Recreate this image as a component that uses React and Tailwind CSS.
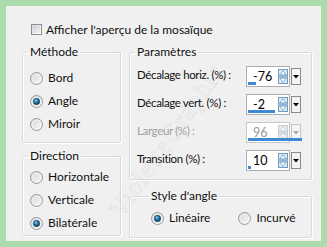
import React from "react";

const font = { fontFamily: "Lato, 'Open Sans', sans-serif" };

function Radio({ checked, label }) {
  return (
    <div className="flex items-center gap-[5px] h-[16px]">
      <svg width="13" height="13" viewBox="0 0 13 13" className="shrink-0">
        <defs>
          <linearGradient id="rb" x1="0" y1="0" x2="1" y2="1">
            <stop offset="0" stopColor="#d6d6d6" />
            <stop offset="1" stopColor="#f8f8f8" />
          </linearGradient>
          <radialGradient id="rd" cx="0.4" cy="0.35" r="0.7">
            <stop offset="0" stopColor="#8fd0f0" />
            <stop offset="0.5" stopColor="#1f6d9c" />
            <stop offset="1" stopColor="#0b3d5e" />
          </radialGradient>
        </defs>
        <circle cx="6.5" cy="6.5" r="6" fill="url(#rb)" stroke="#9a9a9a" strokeWidth="1" />
        <circle cx="6.5" cy="6.5" r="4.3" fill="none" stroke="#ffffff" strokeOpacity="0.6" strokeWidth="1" />
        {checked && <circle cx="6.5" cy="6.5" r="3.2" fill="url(#rd)" stroke="#0e3f60" strokeWidth="0.6" />}
      </svg>
      <span className="text-[12px] text-[#111] whitespace-nowrap">{label}</span>
    </div>
  );
}

function SpinArrows({ disabled }) {
  const c = disabled ? "#c4cdd4" : "#6f9cc4";
  const f = disabled ? "#e8ecef" : "#dbe9f5";
  return (
    <svg width="10" height="15" viewBox="0 0 10 15" className="shrink-0">
      <rect x="0.5" y="0.5" width="9" height="6.5" fill={f} stroke={c} />
      <rect x="0.5" y="8" width="9" height="6.5" fill={f} stroke={c} />
      <path d="M1.8 5.8 L5 1.8 L8.2 5.8 Z" fill="#fff" stroke={c} strokeWidth="0.8" />
      <path d="M1.8 9.2 L5 13.2 L8.2 9.2 Z" fill="#fff" stroke={c} strokeWidth="0.8" />
    </svg>
  );
}

function Spin({ value, bar, disabled, full }) {
  return (
    <div className="relative flex items-center h-[21px] shrink-0">
      <div className={`flex items-center w-[44px] h-[21px] border ${disabled ? "border-[#c8c8c8]" : "border-[#abadb3]"} bg-white pl-[6px] pr-[1px]`}>
        <span className={`flex-1 text-[12.5px] leading-none pt-[1px] ${disabled ? "text-[#9a9a9a]" : "text-black"}`}>{value}</span>
        <SpinArrows disabled={disabled} />
      </div>
      <div className={`ml-[1px] w-[10px] h-[17px] flex items-center justify-center border ${disabled ? "border-[#c8c8c8] bg-[#f4f4f4]" : "border-[#8a8a8a] bg-[#f4f4f4]"}`}>
        <svg width="6" height="4" viewBox="0 0 6 4">
          <path d="M0 0 L6 0 L3 3.5 Z" fill={disabled ? "#a8a8a8" : "#000"} />
        </svg>
      </div>
      <div
        className="absolute left-[2px] bottom-[2px] h-[3px] bg-[#3d8ad4]"
        style={{ width: full ? 54 : bar }}
      />
    </div>
  );
}

function Row({ label, value, bar, disabled, full }) {
  return (
    <div className="flex items-center justify-between gap-[2px] h-[21px]">
      <span className={`text-[11.5px] tracking-[-0.35px] whitespace-nowrap -mt-[4px] ${disabled ? "text-[#a0a0a0]" : "text-[#111]"}`}>{label}</span>
      <Spin value={value} bar={bar} disabled={disabled} full={full} />
    </div>
  );
}

function Group({ title, className, children }) {
  return (
    <fieldset className={`min-w-0 border border-[#d5dbe0] rounded-[2px] shadow-[inset_1px_1px_0_#ffffff,1px_1px_0_#ffffff] px-[7px] ${className}`}>
      <legend className="text-[12px] text-[#111] leading-[16px] px-[2px] -ml-[2px]">{title}</legend>
      {children}
    </fieldset>
  );
}

export default function App() {
  return (
    <div style={font} className="relative w-[327px] h-[247px] overflow-hidden border-[6px] border-[#acdcac] bg-[#f0f0f0] select-none">
      <div className="flex items-center gap-[4px] ml-[25px] mt-[17px] h-[13px]">
        <div className="w-[11px] h-[11px] border border-[#8e8f8f] bg-gradient-to-br from-[#dcdcdc] to-[#ffffff] flex items-center justify-center">
          <div className="w-[7px] h-[7px] bg-gradient-to-br from-[#cfcfcf] to-[#f4f4f4]" />
        </div>
        <span className="text-[12px] text-[#111]">Afficher l'aperçu de la mosaïque</span>
      </div>

      <div className="flex gap-[8px] ml-[16px] mt-[8px]">
        <div className="flex flex-col w-[99px] shrink-0">
          <Group title="Méthode" className="h-[99px] pt-[10px]">
            <div className="flex flex-col gap-[7px]">
              <Radio label="Bord" />
              <Radio label="Angle" checked />
              <Radio label="Miroir" />
            </div>
          </Group>
          <Group title="Direction" className="h-[88px] mt-[5px] pt-[5px]">
            <div className="flex flex-col gap-[7px]">
              <Radio label="Horizontale" />
              <Radio label="Verticale" />
              <Radio label="Bilatérale" checked />
            </div>
          </Group>
        </div>

        <div className="flex flex-col w-[183px] shrink-0">
          <Group title="Paramètres" className="h-[136px] pt-[6px] pr-[10px]">
            <div className="flex flex-col gap-[7px]">
              <Row label="Décalage horiz. (%) :" value="-76" bar={8} />
              <Row label="Décalage vert. (%) :" value="-2" bar={27} />
              <Row label="Largeur (%) :" value="96" disabled full />
              <Row label="Transition (%) :" value="10" bar={3} />
            </div>
          </Group>
          <Group title="Style d'angle" className="h-[50px] mt-[8px] pt-[6px] pl-[21px]">
            <div className="flex gap-[28px]">
              <Radio label="Linéaire" checked />
              <Radio label="Incurvé" />
            </div>
          </Group>
        </div>
      </div>

      <div className="pointer-events-none absolute left-[70px] top-[115px] -rotate-[55deg] text-[26px] tracking-[1px] text-transparent [-webkit-text-stroke:0.5px_rgba(160,160,160,0.25)]" style={{ fontFamily: "'Liberation Serif', serif" }}>
        VioletteGraphic
      </div>
    </div>
  );
}
